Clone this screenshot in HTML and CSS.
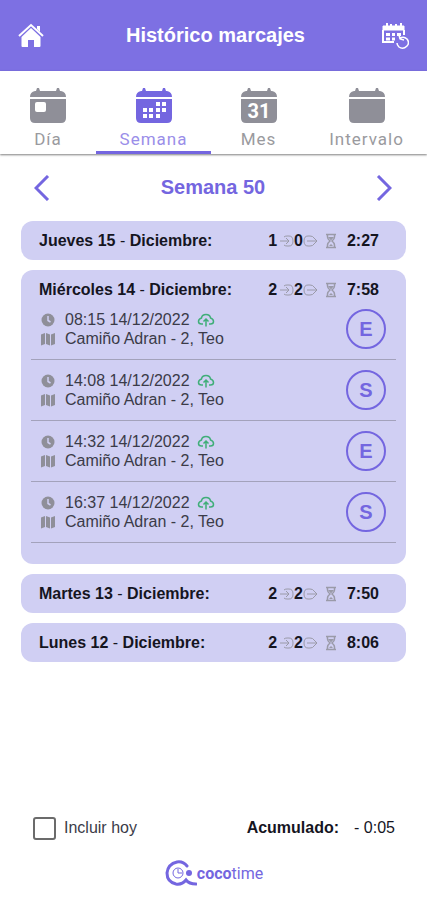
FILE: index.html
```html
<!DOCTYPE html>
<html lang="es">
<head>
    <meta charset="UTF-8">
    <meta name="viewport" content="width=device-width, initial-scale=1.0">
    <title>Histórico marcajes</title>
    <link rel="stylesheet" href="styles.css">
</head>
<body>
    <!-- Iconos compartidos -->
    <svg class="sprite" aria-hidden="true">
        <symbol id="calendar" viewBox="0 0 36 36">
            <path d="M0 9q0-5 5-6h1l1-3h2l1 3h16l1-3h2l1 3h1q5 1 5 6z"/>
            <path d="M0 11h36v19q0 5-5 5H5q-5 0-5-5z"/>
        </symbol>
        <symbol id="enter" viewBox="0 0 14 14">
            <path d="M0 7h9M6 4l3 3-3 3M4 3q1-1 3-1h2q4 0 4 5t-4 5H7q-2 0-3-1" fill="none" stroke="currentColor"/>
        </symbol>
        <symbol id="exit" viewBox="0 0 16 14">
            <path d="M4 7h10M11 4l3 3-3 3M11 4Q10 2 7 2H5Q1 2 1 7t4 5h2q3 0 4-2" fill="none" stroke="currentColor"/>
        </symbol>
        <symbol id="hourglass" viewBox="0 0 12 16">
            <path d="M1 1.500h10M1 14.500h10M2.500 2v2q0 2 2.500 4-2.500 2-2.500 4v2M9.500 2v2q0 2-2.500 4 2.500 2 2.500 4v2" fill="none" stroke="currentColor" stroke-width="1.500"/>
            <path d="M3 4h6L6 7.500zM4 13l2-2 2 2z" fill="currentColor"/>
        </symbol>
        <symbol id="clock" viewBox="0 0 14 14">
            <circle cx="7" cy="7" r="6.500" fill="currentColor"/>
            <path d="M7 3v4.500l2.500 1.500" fill="none" stroke="#d0cff3" stroke-width="1.500"/>
        </symbol>
        <symbol id="map" viewBox="0 0 14 14">
            <path d="M0 2.500 4 1v11L0 13.500zM5 1l4 1.500v11L5 12zM10 2.500 14 1v11l-4 1.500z" fill="currentColor"/>
        </symbol>
        <symbol id="cloud" viewBox="0 0 18 14">
            <path d="M6 11H4.500Q1.500 11 1.500 8.500T4.500 5Q5 1.500 9 1.500T13.500 5q3 1 3 3.500t-3 2.500H12M9 13.500V6M6.500 8.500 9 6l2.500 2.500" fill="none" stroke="currentColor" stroke-width="1.500"/>
        </symbol>
    </svg>

    <header class="topbar">
        <button class="icon-btn" aria-label="Inicio">
            <svg width="26" height="26" viewBox="0 0 26 26">
                <path d="M1 13 13 2l12 11" fill="none" stroke="#fff" stroke-width="2"/>
                <path d="M19 3h3v6l-3-3z" fill="#fff"/>
                <path d="M13 5 3.500 14v9q0 1 1 1H10v-7h6v7h5.500q1 0 1-1v-9z" fill="#fff"/>
            </svg>
        </button>
        <h1>Histórico marcajes</h1>
        <button class="icon-btn" aria-label="Recargar calendario">
            <svg width="28" height="28" viewBox="0 0 28 28" fill="none" stroke="#fff">
                <path d="M2 4h21v4H2z" fill="#fff"/>
                <path d="M6 1v4M10 2v3M15 2v3M20 1v4" stroke-width="2"/>
                <path d="M2 8v12h11M23 8v5" stroke-width="2"/>
                <path d="M5 11h4v3H5zM11 11h3v3h-3zM16 11h4v3h-4zM5 15.500h4v3H5zM11 15.500h3v3h-3z" fill="#fff" stroke="none"/>
                <path d="M19 16q4-2 7 1 3 4 0 7-4 4-8 1-2-2-2-4M18 13l1 4 4 1" stroke-width="1.500"/>
            </svg>
        </button>
    </header>

    <nav class="tabs">
        <button class="tab">
            <svg class="tab-icon"><use href="#calendar"/><rect x="5" y="14" width="11" height="10" rx="2" fill="#fff"/></svg>
            <span>Día</span>
        </button>
        <button class="tab active">
            <svg class="tab-icon"><use href="#calendar"/>
                <g fill="#fff"><path d="M20 14h4v4h-4zM26 14h4v4h-4zM7 20h4v4H7zM13 20h4v4h-4zM20 20h4v4h-4zM26 20h4v4h-4zM7 26h4v4H7zM13 26h4v4h-4zM20 26h4v4h-4z"/></g>
            </svg>
            <span>Semana</span>
        </button>
        <button class="tab">
            <svg class="tab-icon"><use href="#calendar"/><text class="tab-number" x="18" y="30">31</text></svg>
            <span>Mes</span>
        </button>
        <button class="tab">
            <svg class="tab-icon"><use href="#calendar"/></svg>
            <span>Intervalo</span>
        </button>
    </nav>

    <main class="content">
        <div class="week">
            <button class="arrow" aria-label="Semana anterior">
                <svg width="16" height="26" viewBox="0 0 16 26"><path d="M14 1 2 13l12 12" fill="none" stroke="currentColor" stroke-width="3"/></svg>
            </button>
            <h2>Semana 50</h2>
            <button class="arrow" aria-label="Semana siguiente">
                <svg width="16" height="26" viewBox="0 0 16 26"><path d="m2 1 12 12L2 25" fill="none" stroke="currentColor" stroke-width="3"/></svg>
            </button>
        </div>

        <section class="day">
            <div class="day-header">
                <h3>Jueves 15 <span>-</span> Diciembre:</h3>
                <div class="summary">
                    <b>1</b><svg class="enter"><use href="#enter"/></svg><b>0</b><svg class="exit"><use href="#exit"/></svg>
                    <svg class="hourglass"><use href="#hourglass"/></svg><b class="total">2:27</b>
                </div>
            </div>
        </section>

        <section class="day open">
            <div class="day-header">
                <h3>Miércoles 14 <span>-</span> Diciembre:</h3>
                <div class="summary">
                    <b>2</b><svg class="enter"><use href="#enter"/></svg><b>2</b><svg class="exit"><use href="#exit"/></svg>
                    <svg class="hourglass"><use href="#hourglass"/></svg><b class="total">7:58</b>
                </div>
            </div>
            <ul class="entries">
                <li class="entry">
                    <div class="entry-info">
                        <p><svg class="small-icon"><use href="#clock"/></svg>08:15 14/12/2022<svg class="cloud"><use href="#cloud"/></svg></p>
                        <p><svg class="small-icon"><use href="#map"/></svg>Camiño Adran - 2, Teo</p>
                    </div>
                    <span class="type">E</span>
                </li>
                <li class="entry">
                    <div class="entry-info">
                        <p><svg class="small-icon"><use href="#clock"/></svg>14:08 14/12/2022<svg class="cloud"><use href="#cloud"/></svg></p>
                        <p><svg class="small-icon"><use href="#map"/></svg>Camiño Adran - 2, Teo</p>
                    </div>
                    <span class="type">S</span>
                </li>
                <li class="entry">
                    <div class="entry-info">
                        <p><svg class="small-icon"><use href="#clock"/></svg>14:32 14/12/2022<svg class="cloud"><use href="#cloud"/></svg></p>
                        <p><svg class="small-icon"><use href="#map"/></svg>Camiño Adran - 2, Teo</p>
                    </div>
                    <span class="type">E</span>
                </li>
                <li class="entry">
                    <div class="entry-info">
                        <p><svg class="small-icon"><use href="#clock"/></svg>16:37 14/12/2022<svg class="cloud"><use href="#cloud"/></svg></p>
                        <p><svg class="small-icon"><use href="#map"/></svg>Camiño Adran - 2, Teo</p>
                    </div>
                    <span class="type">S</span>
                </li>
            </ul>
        </section>

        <section class="day">
            <div class="day-header">
                <h3>Martes 13 <span>-</span> Diciembre:</h3>
                <div class="summary">
                    <b>2</b><svg class="enter"><use href="#enter"/></svg><b>2</b><svg class="exit"><use href="#exit"/></svg>
                    <svg class="hourglass"><use href="#hourglass"/></svg><b class="total">7:50</b>
                </div>
            </div>
        </section>

        <section class="day">
            <div class="day-header">
                <h3>Lunes 12 <span>-</span> Diciembre:</h3>
                <div class="summary">
                    <b>2</b><svg class="enter"><use href="#enter"/></svg><b>2</b><svg class="exit"><use href="#exit"/></svg>
                    <svg class="hourglass"><use href="#hourglass"/></svg><b class="total">8:06</b>
                </div>
            </div>
        </section>
    </main>

    <footer class="footer">
        <div class="footer-row">
            <input type="checkbox" id="includeToday">
            <label for="includeToday">Incluir hoy</label>
            <b>Acumulado:</b>
            <span class="balance">- 0:05</span>
        </div>
        <div class="logo">
            <svg width="32" height="26" viewBox="0 0 32 26" fill="none" stroke="currentColor">
                <path d="M22 6Q18 1 12 2 3 4 2 13q0 9 9 11 6 1 10-4 3 4 10 4" stroke-width="3" stroke-linecap="round"/>
                <circle cx="13" cy="13" r="5"/>
                <path d="M13 9v4h4"/>
                <circle cx="24" cy="13" r="3" fill="currentColor" stroke="none"/>
            </svg>
            <span><b>coco</b>time</span>
        </div>
    </footer>
</body>
</html>
```
FILE: styles.css
```css
* {
    margin: 0;
    padding: 0;
    box-sizing: border-box;
}

body {
    font-family: "Liberation Sans", Arial, sans-serif;
    font-size: 16px;
    min-height: 100vh;
    display: flex;
    flex-direction: column;
    background-color: #fff;
    color: #15151f;
}

button {
    border: none;
    background: none;
    font-family: inherit;
    cursor: pointer;
}

svg {
    display: block;
    flex-shrink: 0;
}

.sprite {
    position: absolute;
    width: 0;
    height: 0;
}

.topbar {
    display: flex;
    align-items: center;
    justify-content: space-between;
    height: 71px;
    padding: 0 18px;
    background-color: #7d70e3;
    color: #fff;
}

.topbar h1 {
    margin-left: 6px;
    font-size: 20px;
}

.icon-btn {
    height: 28px;
}

.tabs {
    display: grid;
    grid-template-columns: 96fr 115fr 95fr 121fr;
    height: 83px;
    box-shadow: 0 1px 2px rgba(0, 0, 0, 0.5);
}

.tab {
    display: flex;
    flex-direction: column;
    align-items: center;
    gap: 5px;
    padding-top: 17px;
    border-bottom: 3px solid transparent;
    font-family: Roboto, sans-serif;
    font-size: 17px;
    line-height: 20px;
    letter-spacing: 1px;
    color: #9a9a9e;
}

.tab.active {
    color: #9a8ee9;
    border-bottom-color: #7466e0;
}

.tab-icon {
    width: 36px;
    height: 36px;
    fill: #8f8f98;
}

.tab.active .tab-icon {
    fill: #7466e0;
}

.tab-number {
    font-size: 20px;
    font-weight: bold;
    letter-spacing: 0;
    text-anchor: middle;
    fill: #fff;
}

.content {
    flex: 1;
    padding: 0 21px;
}

.week {
    display: flex;
    align-items: center;
    justify-content: space-between;
    height: 67px;
    padding: 0 14px 0 13px;
    color: #7466e0;
}

.week h2 {
    font-size: 20px;
}

.arrow {
    color: inherit;
}

.day {
    margin-bottom: 10px;
    border-radius: 12px;
    background-color: #d0cff3;
}

.day.open {
    padding-bottom: 21px;
}

.day-header {
    display: flex;
    align-items: center;
    justify-content: space-between;
    height: 39px;
    padding: 0 27px 0 18px;
}

.day-header h3 {
    font-size: 16px;
}

.day-header h3 span {
    font-weight: normal;
}

.summary {
    display: flex;
    align-items: center;
    color: #9a9aa8;
}

.summary b {
    color: #15151f;
}

.enter {
    width: 14px;
    height: 14px;
    margin-left: 3px;
}

.exit {
    width: 16px;
    height: 14px;
}

.hourglass {
    width: 12px;
    height: 16px;
    margin: 0 10px 0 6px;
}

.entries {
    margin-top: -10px;
    padding: 0 10px;
    list-style: none;
}

.entry {
    display: flex;
    align-items: center;
    justify-content: space-between;
    height: 61px;
    padding: 0 10px;
    border-bottom: 1px solid #a3a2bb;
    color: #3b3b48;
}

.entry-info p {
    display: flex;
    align-items: center;
    line-height: 19px;
}

.small-icon {
    width: 14px;
    height: 14px;
    margin-right: 10px;
    color: #8f8f99;
}

.cloud {
    width: 18px;
    height: 14px;
    margin-left: 7px;
    color: #3fae78;
}

.type {
    display: flex;
    align-items: center;
    justify-content: center;
    width: 40px;
    height: 40px;
    border: 2px solid #7466e0;
    border-radius: 50%;
    font-size: 20px;
    font-weight: bold;
    color: #7466e0;
}

.footer {
    padding: 0 32px 14px 33px;
}

.footer-row {
    display: flex;
    align-items: center;
    height: 24px;
    margin-bottom: 20px;
}

.footer-row input {
    appearance: none;
    width: 23px;
    height: 23px;
    margin-right: 8px;
    border: 2px solid #6b6b6b;
    border-radius: 3px;
}

.footer-row input:checked {
    background-color: #7466e0;
}

.footer-row label {
    margin-right: auto;
    color: #3b3b48;
}

.balance {
    margin-left: 15px;
}

.logo {
    display: flex;
    align-items: center;
    justify-content: center;
    color: #7466e0;
    font-family: Roboto, sans-serif;
}
```
